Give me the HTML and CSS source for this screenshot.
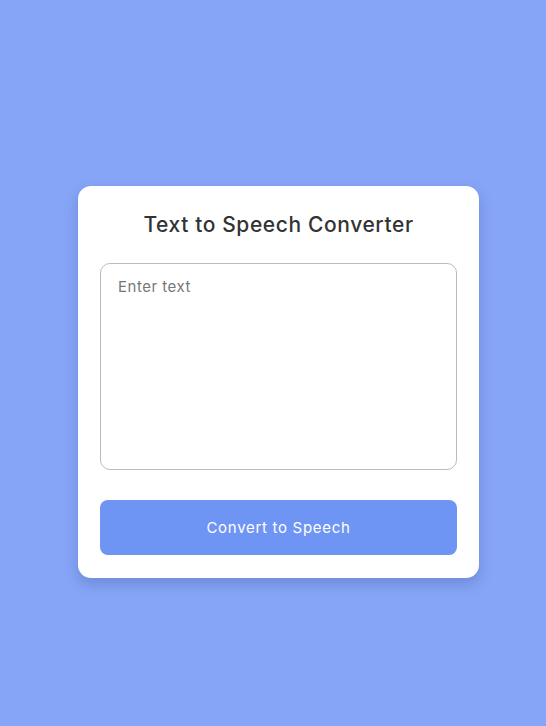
FILE: index.html
```html
<!DOCTYPE html>
<html lang="en">
<head>
<meta charset="utf-8">
<title>Text to Speech Converter</title>
<link rel="stylesheet" href="styles.css">
</head>
<body>
<main class="card">
  <h1 class="title">Text to Speech Converter</h1>
  <textarea class="input" placeholder="Enter text"></textarea>
  <button class="btn" type="button">Convert to Speech</button>
</main>
</body>
</html>
```
FILE: styles.css
```css
html, body {
  margin: 0;
  height: 100%;
}
body {
  background: #86a5f7;
  font-family: "Inter", "Noto Sans", sans-serif;
  padding: 186px 0 0 78px;
  box-sizing: border-box;
}
.card {
  width: 401px;
  box-sizing: border-box;
  background: #fff;
  border-radius: 13px;
  padding: 27px 22px 23px;
  box-shadow: 0 6px 14px rgba(40, 60, 120, 0.25);
  display: flex;
  flex-direction: column;
}
.title {
  margin: 0 0 26px;
  text-align: center;
  font-size: 21px;
  line-height: 24px;
  font-weight: 500;
  letter-spacing: 0.6px;
  color: #333;
}
.input {
  height: 207px;
  box-sizing: border-box;
  border: 1px solid #bbb;
  border-radius: 10px;
  padding: 13px 17px;
  font-family: inherit;
  font-size: 15px;
  letter-spacing: 0.5px;
  resize: none;
  outline: none;
  margin: 0 0 30px;
}
.input::placeholder {
  color: #777;
}
.btn {
  height: 55px;
  border: none;
  border-radius: 8px;
  background: #6e94f4;
  color: #fff;
  font-family: inherit;
  font-size: 15px;
  letter-spacing: 0.7px;
  cursor: pointer;
}
```
